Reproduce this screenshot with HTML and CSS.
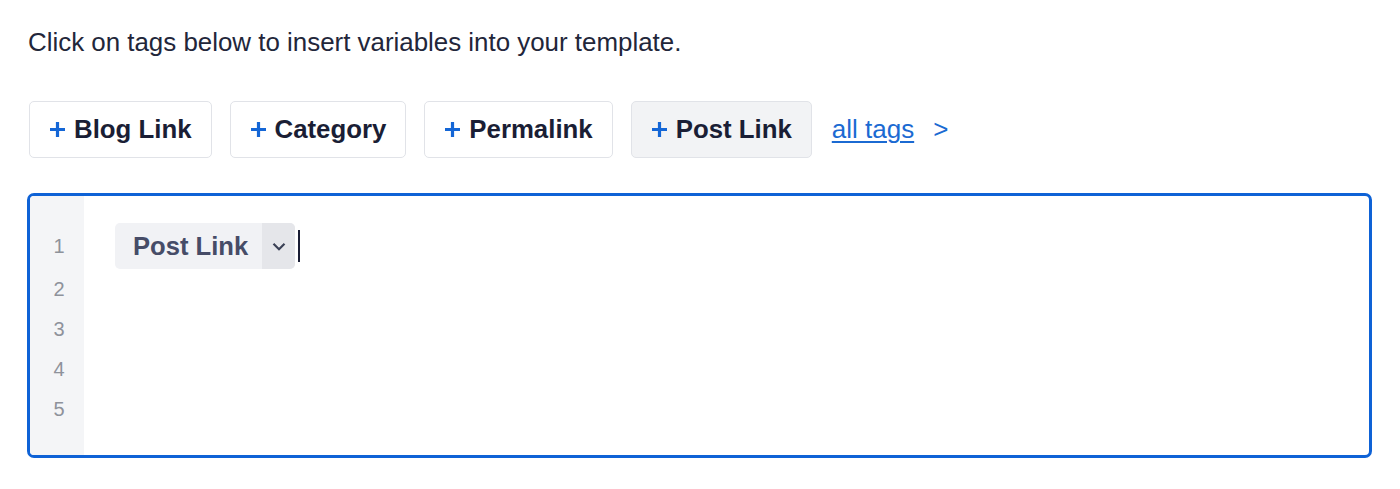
FILE: index.html
```html
<!DOCTYPE html>
<html>
<head>
<meta charset="utf-8">
<link rel="stylesheet" href="styles.css">
</head>
<body>
<div class="page">
  <p class="intro">Click on tags below to insert variables into your template.</p>
  <div class="tags">
    <button class="tag"><svg class="plus" viewBox="0 0 17 17"><path d="M8.5 1v15M1 8.5h15"/></svg>Blog Link</button>
    <button class="tag"><svg class="plus" viewBox="0 0 17 17"><path d="M8.5 1v15M1 8.5h15"/></svg>Category</button>
    <button class="tag"><svg class="plus" viewBox="0 0 17 17"><path d="M8.5 1v15M1 8.5h15"/></svg>Permalink</button>
    <button class="tag tag-active"><svg class="plus" viewBox="0 0 17 17"><path d="M8.5 1v15M1 8.5h15"/></svg>Post Link</button>
    <a class="all-tags" href="#">all tags</a>
    <span class="arrow">&gt;</span>
  </div>
  <div class="editor">
    <div class="gutter">
      <div class="num num-first">1</div>
      <div class="num">2</div>
      <div class="num">3</div>
      <div class="num">4</div>
      <div class="num">5</div>
    </div>
    <div class="content">
      <div class="line line-first">
        <span class="chip"><span class="chip-label">Post Link</span><span class="chip-drop"><svg class="chev" width="14" height="9" viewBox="0 0 14 9"><path d="M1.5 1.8l5.5 5.5 5.5-5.5"/></svg></span></span><span class="cursor"></span>
      </div>
      <div class="line"></div>
      <div class="line"></div>
      <div class="line"></div>
      <div class="line"></div>
    </div>
  </div>
</div>
</body>
</html>
```

FILE: styles.css
```css
html, body {
  margin: 0;
  padding: 0;
  background: #ffffff;
}
body {
  font-family: "Liberation Sans", Arial, Helvetica, sans-serif;
  color: #1b1f33;
}
.page {
  padding: 27px 28px 0 27px;
}
.intro {
  margin: 0 0 0 1px;
  font-size: 25.9px;
  line-height: 30px;
  color: #22263a;
}
.tags {
  display: flex;
  align-items: center;
  margin-top: 44px;
  margin-left: 2px;
}
.tag {
  display: flex;
  align-items: center;
  height: 57px;
  box-sizing: border-box;
  padding: 0 19px 0 19px;
  margin-right: 18px;
  border: 1px solid #e1e3e8;
  border-radius: 5px;
  background: #ffffff;
  font-family: "Liberation Sans", Arial, Helvetica, sans-serif;
  font-size: 25.8px;
  font-weight: 700;
  color: #1a1e35;
}
.tag-active {
  background: #f2f3f5;
  margin-right: 20px;
}
.plus {
  width: 17px;
  height: 17px;
  flex: none;
  margin-right: 8px;
  fill: none;
  stroke: #1466d6;
  stroke-width: 3.2;
}
.all-tags {
  font-size: 26px;
  color: #1b6ad2;
  text-decoration: underline;
  text-underline-offset: 3px;
  text-decoration-thickness: 1.5px;
}
.arrow {
  margin-left: 19px;
  font-size: 26px;
  color: #1b6ad2;
}
.editor {
  display: flex;
  margin-top: 35px;
  border: 3px solid #0e62d6;
  border-radius: 7px;
  height: 265px;
  box-sizing: border-box;
  overflow: hidden;
}
.gutter {
  width: 54px;
  flex: none;
  background: #f4f5f7;
  padding-top: 25px;
  box-sizing: border-box;
}
.num {
  height: 40px;
  display: flex;
  align-items: center;
  justify-content: center;
  padding-left: 4px;
  font-size: 20px;
  color: #8e929b;
}
.num-first {
  height: 48px;
  padding-top: 2px;
  box-sizing: border-box;
}
.content {
  flex: 1;
  padding: 25px 0 0 31px;
}
.line {
  height: 40px;
}
.line-first {
  height: 48px;
  display: flex;
  align-items: flex-end;
}
.chip {
  display: flex;
  align-items: stretch;
  height: 46px;
  border-radius: 5px;
  background: #f1f2f5;
  overflow: hidden;
}
.chip-label {
  display: flex;
  align-items: center;
  padding: 0 14px 0 18px;
  font-size: 25.6px;
  font-weight: 700;
  color: #464c67;
}
.chip-drop {
  width: 33px;
  flex: none;
  display: flex;
  align-items: center;
  justify-content: center;
  background: #e5e6ea;
}
.chev {
  width: 14px;
  height: 9px;
  flex: none;
  fill: none;
  stroke: #3c4257;
  stroke-width: 2.2;
}
.cursor {
  width: 2px;
  height: 32px;
  margin: 0 0 7px 3px;
  background: #1a1e35;
}
```
